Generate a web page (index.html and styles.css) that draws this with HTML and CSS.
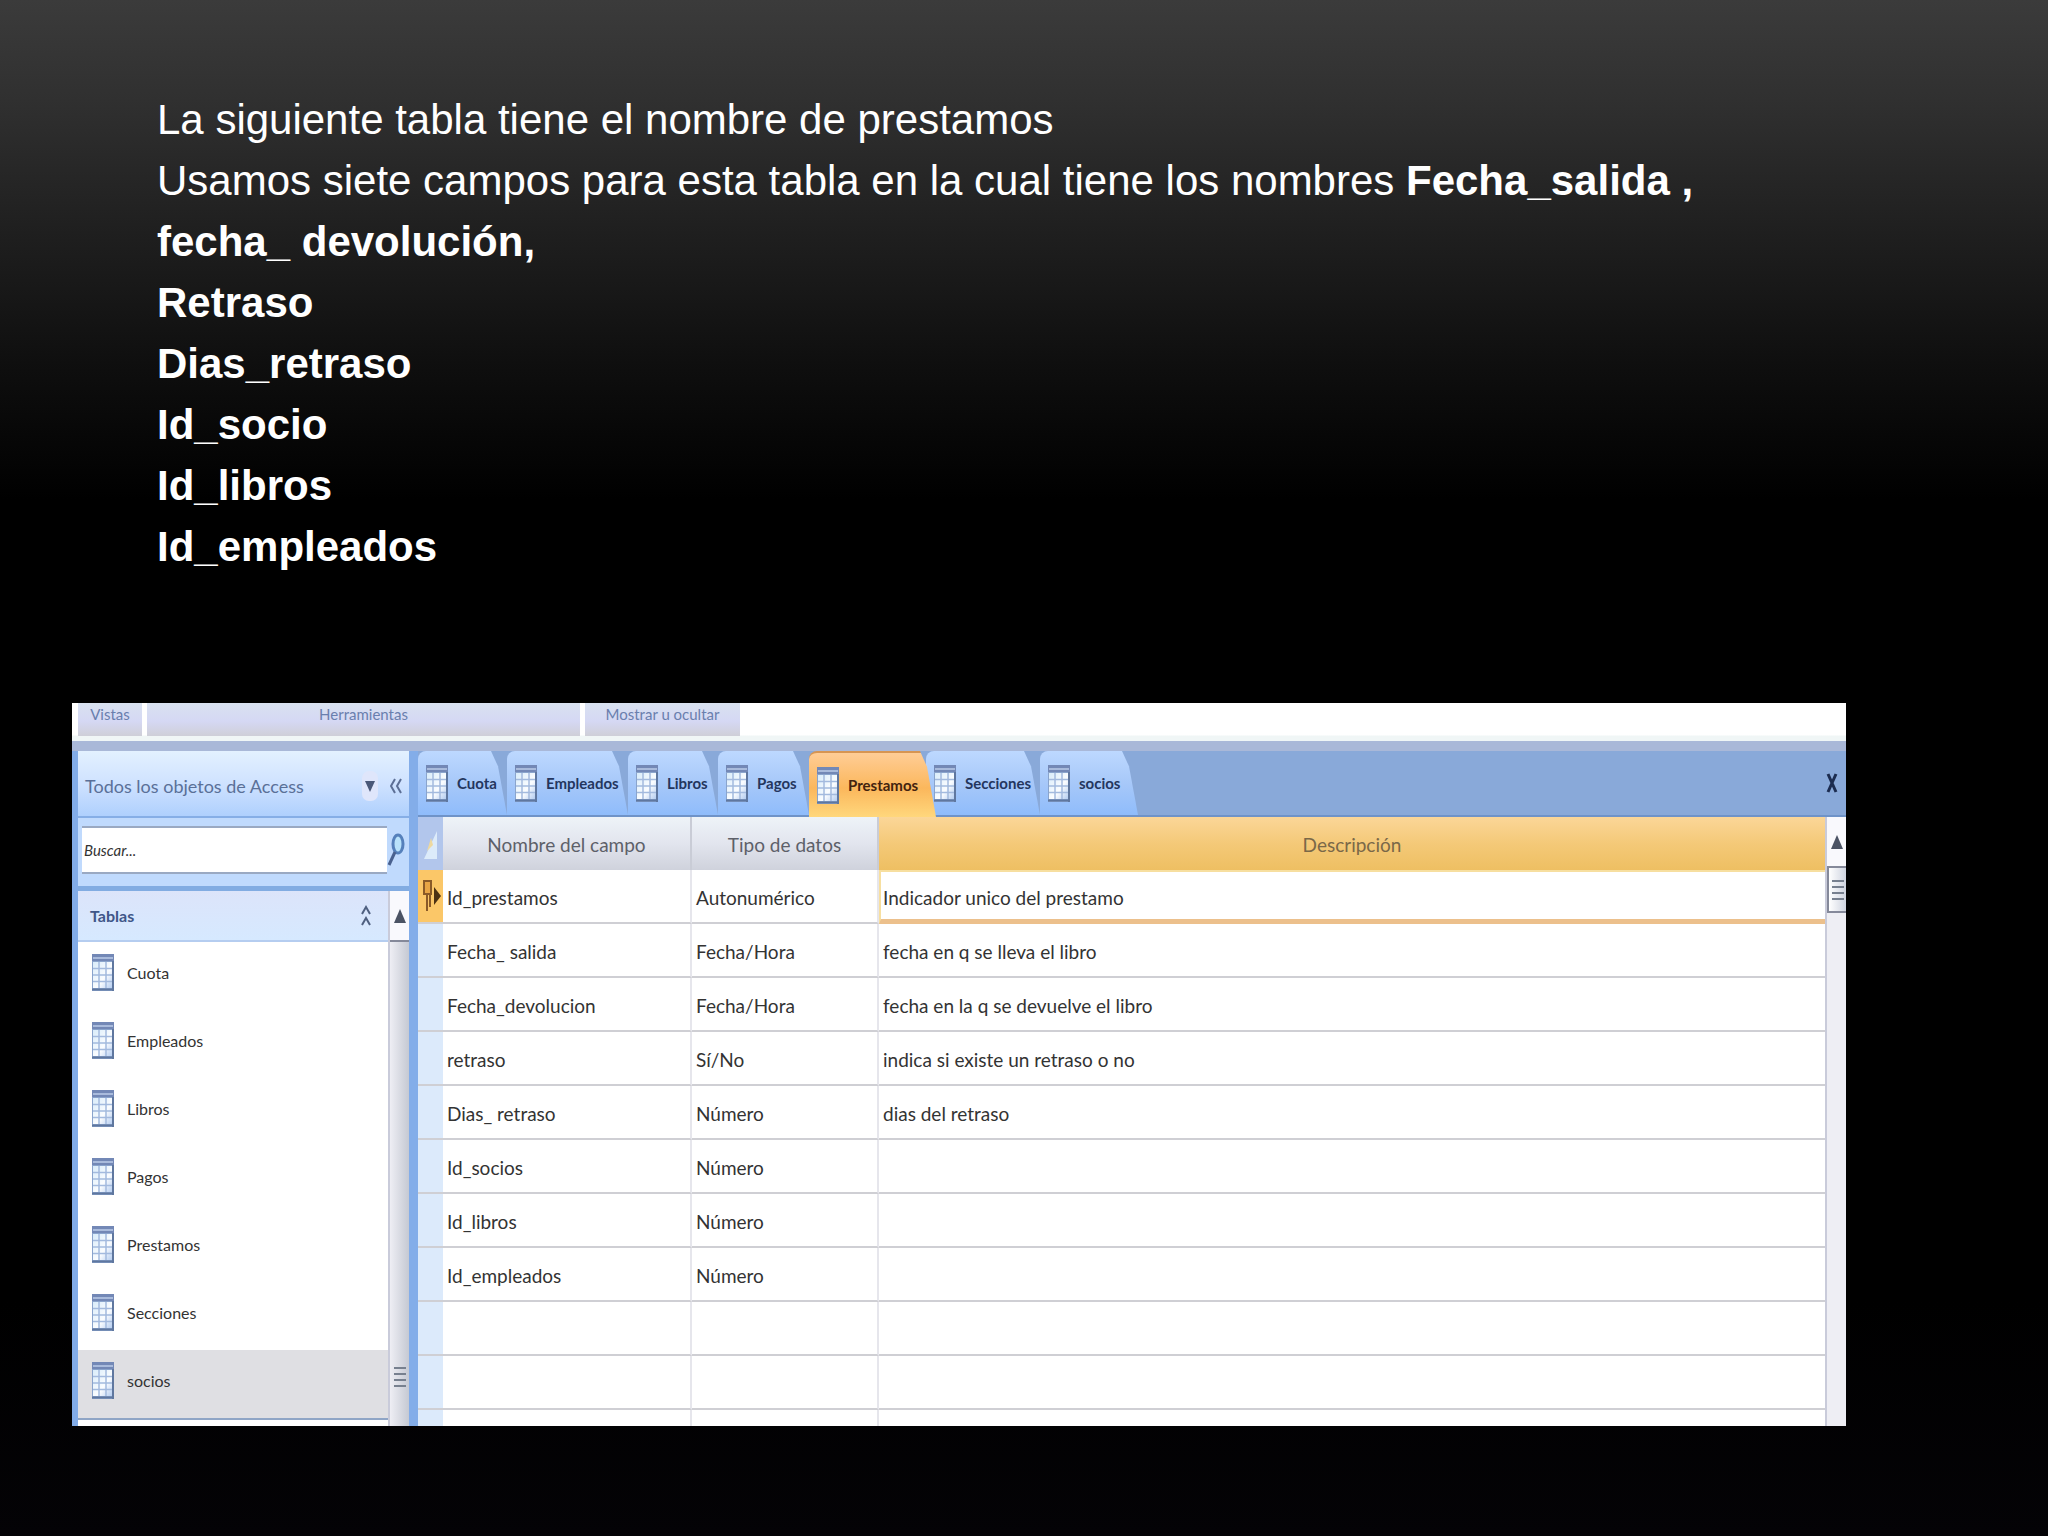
FILE: index.html
```html
<!DOCTYPE html>
<html lang="es">
<head>
<meta charset="UTF-8">
<meta name="viewport" content="width=device-width, initial-scale=1.0">
<title>Tabla Prestamos</title>
<link rel="stylesheet" href="styles.css">
</head>
<body>

<!-- shared icons -->
<svg class="sprite" aria-hidden="true">
  <linearGradient id="gridFill" x1="0" y1="0" x2="1" y2="1">
    <stop offset="0" stop-color="#d9ecfa"/>
    <stop offset="0.6" stop-color="#fbfdff"/>
    <stop offset="1" stop-color="#b5cdf0"/>
  </linearGradient>
  <symbol id="icon-table" viewBox="0 0 22 37" preserveAspectRatio="none">
    <rect x="0" y="0" width="22" height="37" fill="#8aa4cc"/>
    <rect x="0" y="0" width="22" height="7" fill="#7388b6"/>
    <rect x="1" y="3" width="20" height="2" fill="#a9bbdc"/>
    <rect x="1" y="8" width="19" height="26" fill="url(#gridFill)"/>
    <path d="M1 14.5H20M1 21H20M1 27.5H20M7 8V34M14 8V34" stroke="#a3bade" stroke-width="1.5"/>
    <path d="M0 35.5H22M21 7V37" stroke="#5f779f" stroke-width="2"/>
  </symbol>
</svg>

<div class="slide">
  <div class="intro">
    <p>La siguiente tabla tiene el nombre de prestamos</p>
    <p>Usamos siete campos para esta tabla en la cual tiene los nombres <b>Fecha_salida ,</b></p>
    <p><b>fecha_ devolución,</b></p>
    <p><b>Retraso</b></p>
    <p><b>Dias_retraso</b></p>
    <p><b>Id_socio</b></p>
    <p><b>Id_libros</b></p>
    <p><b>Id_empleados</b></p>
  </div>

  <div class="window">
    <div class="ribbon">
      <div class="group">Vistas</div>
      <div class="group">Herramientas</div>
      <div class="group">Mostrar u ocultar</div>
    </div>

    <div class="panes">
      <nav class="sidebar">
        <div class="sidebar-header">
          <span class="sidebar-title">Todos los objetos de Access</span>
          <button class="icon-button" aria-label="Filtro"><svg width="16" height="30" viewBox="0 0 16 30"><rect width="16" height="30" rx="7" fill="#dfe6fb"/><path d="M3 10H13L8 21Z" fill="#4a5878"/></svg></button>
          <button class="icon-button" aria-label="Contraer panel"><svg width="12" height="18" viewBox="0 0 12 18" fill="none" stroke="#5c6f96" stroke-width="2"><path d="M5 2L1 9L5 16M11 2L7 9L11 16"/></svg></button>
        </div>

        <form class="search">
          <input type="text" placeholder="Buscar..." aria-label="Buscar">
          <button class="icon-button" type="button" aria-label="Buscar objeto"><svg width="18" height="36" viewBox="0 0 18 36" fill="none"><ellipse cx="11" cy="12" rx="5" ry="9" fill="#b9e2fb" stroke="#5580bb" stroke-width="3"/><path d="M8 20L2 33" stroke="#49618f" stroke-width="3"/></svg></button>
        </form>

        <div class="objects">
          <div class="object-list">
            <div class="group-title">
              <span>Tablas</span>
              <button class="icon-button" aria-label="Contraer grupo"><svg width="10" height="24" viewBox="0 0 10 24" fill="none" stroke="#4f6080" stroke-width="2"><path d="M1 10L5 3L9 10M1 21L5 14L9 21"/></svg></button>
            </div>
            <a class="object" href="#"><svg class="icon"><use href="#icon-table"/></svg>Cuota</a>
            <a class="object" href="#"><svg class="icon"><use href="#icon-table"/></svg>Empleados</a>
            <a class="object" href="#"><svg class="icon"><use href="#icon-table"/></svg>Libros</a>
            <a class="object" href="#"><svg class="icon"><use href="#icon-table"/></svg>Pagos</a>
            <a class="object" href="#"><svg class="icon"><use href="#icon-table"/></svg>Prestamos</a>
            <a class="object" href="#"><svg class="icon"><use href="#icon-table"/></svg>Secciones</a>
            <a class="object selected" href="#"><svg class="icon"><use href="#icon-table"/></svg>socios</a>
          </div>
          <div class="scrollbar">
            <button class="scroll-up" aria-label="Subir"><svg width="12" height="14" viewBox="0 0 12 14"><path d="M6 0L12 14H0Z" fill="#4b5364"/></svg></button>
            <div class="thumb long"><svg width="12" height="22" viewBox="0 0 12 22" stroke="#77808f" stroke-width="2"><path d="M0 2H12M0 8H12M0 14H12M0 20H12"/></svg></div>
          </div>
        </div>
      </nav>

      <main class="document">
        <div class="tabs">
          <button class="tab"><svg class="icon"><use href="#icon-table"/></svg>Cuota</button>
          <button class="tab"><svg class="icon"><use href="#icon-table"/></svg>Empleados</button>
          <button class="tab"><svg class="icon"><use href="#icon-table"/></svg>Libros</button>
          <button class="tab"><svg class="icon"><use href="#icon-table"/></svg>Pagos</button>
          <button class="tab active"><svg class="icon"><use href="#icon-table"/></svg>Prestamos</button>
          <button class="tab"><svg class="icon"><use href="#icon-table"/></svg>Secciones</button>
          <button class="tab"><svg class="icon"><use href="#icon-table"/></svg>socios</button>
          <button class="close" aria-label="Cerrar"><svg width="12" height="20" viewBox="0 0 12 20" fill="none" stroke="#1c2c50" stroke-width="3"><path d="M2 1L10 19M10 1L2 19"/></svg></button>
        </div>

        <div class="sheet">
          <table>
            <colgroup>
              <col class="col-selector">
              <col class="col-name">
              <col class="col-type">
              <col>
            </colgroup>
            <thead>
              <tr>
                <th class="corner"><svg width="14" height="28" viewBox="0 0 14 28"><path d="M13 0V28H0Z" fill="#dcebfa"/><path d="M7 7L9 14L3 20Z" fill="#eed9a0"/></svg></th>
                <th>Nombre del campo</th>
                <th>Tipo de datos</th>
                <th class="current">Descripción</th>
              </tr>
            </thead>
            <tbody>
              <tr>
                <td class="key"><svg width="20" height="34" viewBox="0 0 20 34"><path d="M3 2H10V15H3ZM6 15V32M9 15V28" fill="#e8a545" stroke="#8a5a28" stroke-width="2"/><path d="M13 8L20 17L13 26Z" fill="#4d3112"/></svg></td>
                <td>Id_prestamos</td><td>Autonumérico</td><td class="editing">Indicador unico del prestamo</td>
              </tr>
              <tr><td></td><td>Fecha_ salida</td><td>Fecha/Hora</td><td>fecha en q se lleva el libro</td></tr>
              <tr><td></td><td>Fecha_devolucion</td><td>Fecha/Hora</td><td>fecha en la q se devuelve el libro</td></tr>
              <tr><td></td><td>retraso</td><td>Sí/No</td><td>indica si existe un retraso o no</td></tr>
              <tr><td></td><td>Dias_ retraso</td><td>Número</td><td>dias del retraso</td></tr>
              <tr><td></td><td>Id_socios</td><td>Número</td><td></td></tr>
              <tr><td></td><td>Id_libros</td><td>Número</td><td></td></tr>
              <tr><td></td><td>Id_empleados</td><td>Número</td><td></td></tr>
              <tr><td></td><td></td><td></td><td></td></tr>
              <tr><td></td><td></td><td></td><td></td></tr>
              <tr class="cut"><td></td><td></td><td></td><td></td></tr>
            </tbody>
          </table>
          <div class="scrollbar">
            <button class="scroll-up" aria-label="Subir"><svg width="12" height="14" viewBox="0 0 12 14"><path d="M6 0L12 14H0Z" fill="#4b5364"/></svg></button>
            <div class="thumb"><svg width="12" height="22" viewBox="0 0 12 22" stroke="#77808f" stroke-width="2"><path d="M0 2H12M0 8H12M0 14H12M0 20H12"/></svg></div>
          </div>
        </div>
      </main>
    </div>
  </div>
</div>

</body>
</html>
```

FILE: styles.css
```css
* {
  box-sizing: border-box;
}
body {
  margin: 0;
  min-height: 100vh;
  font-family: Lato, 'Open Sans', sans-serif;
  background: #020104 linear-gradient(#3b3b3b 0, #303030 100px, #1e1e1e 240px, #0e0e0e 370px, #000 500px, #000 1300px, #040306 1536px) no-repeat;
}
button {
  font-family: inherit;
  border: none;
  background: none;
  padding: 0;
}
svg {
  display: block;
}
.sprite {
  position: absolute;
  width: 0;
  height: 0;
}
.icon {
  width: 22px;
  height: 37px;
  flex: none;
}
.icon-button {
  display: flex;
  align-items: center;
}

.slide {
  padding: 89px 202px 0 72px;
}
.intro {
  min-height: 614px;
  padding-left: 85px;
  color: #fff;
  font-family: 'Liberation Sans', Arial, sans-serif;
  font-size: 42px;
}
.intro p {
  margin: 0;
  line-height: 61px;
}

.window {
  background: #fff;
  color: #333;
  overflow: hidden;
}
.ribbon {
  display: flex;
  gap: 5px;
  height: 38px;
  padding: 0 6px 5px;
  background: linear-gradient(#fff 32px, #f0f6f6 33px);
}
.group {
  width: 64px;
  text-align: center;
  font-size: 15px;
  line-height: 22px;
  color: #6a7fae;
  background: linear-gradient(#d9e2f0, #d5d8f4 18px, #cfcfd8);
}
.group:nth-child(2) {
  width: 433px;
}
.group:nth-child(3) {
  width: 155px;
}

.panes {
  display: grid;
  grid-template-columns: 346px 1fr;
  border-top: 10px solid #a9b8d8;
  background: #89a9d9;
}

/* navigation pane */
.sidebar {
  display: flex;
  flex-direction: column;
  border-left: 6px solid #82ace8;
  border-right: 9px solid #83ade9;
}
.sidebar-header {
  display: flex;
  align-items: center;
  gap: 12px;
  height: 67px;
  padding: 4px 7px 0;
  border-bottom: 2px solid #86aee6;
  background: linear-gradient(#e3f1ff, #cfe2ff 50%, #afd0fd);
}
.sidebar-title {
  flex: 1;
  white-space: nowrap;
  font-size: 18px;
  color: #5a7098;
}
.search {
  display: flex;
  height: 73px;
  padding: 8px 4px 12px;
  border-bottom: 5px solid #82ace2;
  background: #c0dafd;
}
.search input {
  flex: 1;
  min-width: 0;
  padding: 0 2px;
  border: 2px solid #9aa9c2;
  border-width: 2px 0;
  background: #fff;
  font: italic 15px Lato, 'Open Sans', sans-serif;
}
.search input::placeholder {
  color: #333;
  opacity: 1;
}
.objects {
  flex: 1;
  display: flex;
  background: #fff;
}
.object-list {
  flex: 1;
}
.group-title {
  display: flex;
  align-items: center;
  justify-content: space-between;
  height: 51px;
  padding: 0 17px 0 12px;
  border-bottom: 2px solid #b5cdf0;
  background: linear-gradient(#dce4fa, #d6e9ff);
  font-size: 16px;
  font-weight: bold;
  color: #3f5688;
}
.object {
  display: flex;
  align-items: center;
  gap: 13px;
  height: 68px;
  padding: 0 14px 8px;
  font-size: 16px;
  color: #333;
  text-decoration: none;
}
.object.selected {
  height: 70px;
  background: #dfdfe3;
  border-bottom: 2px solid #8fa5c6;
}
.scrollbar {
  display: flex;
  flex-direction: column;
  width: 21px;
  border-left: 2px solid #c9cbda;
  background: #eeeef4;
}
.scroll-up {
  display: flex;
  justify-content: center;
  align-items: center;
  height: 49px;
  background: #f9f9fd;
}
.thumb {
  display: flex;
  justify-content: center;
  align-items: center;
  height: 47px;
  border: 2px solid #85899a;
  border-right: none;
  background: linear-gradient(90deg, #fff, #cfd4e0);
}
.thumb.long {
  flex: 1;
  align-items: flex-end;
  padding-bottom: 38px;
  border-width: 2px 0 0;
  background: linear-gradient(90deg, #eeeef4, #c5c9d3);
}

/* open tables */
.tabs {
  display: grid;
  grid-template-columns: 89px 121px 90px 91px 117px 114px 98px 1fr;
  height: 66px;
  border-bottom: 2px solid #6f93c8;
}
.tab {
  display: flex;
  align-items: center;
  gap: 9px;
  padding: 0 8px;
  border-radius: 8px 12px 0 0;
  background: linear-gradient(#bdd8ff, #a7c8f9 50%, #8fbcfb);
  clip-path: polygon(0 0, calc(100% - 16px) 0, calc(100% - 9px) 24%, 100% 100%, 0 100%);
  font-size: 15px;
  font-weight: bold;
  color: #24365e;
}
.tab.active {
  position: relative;
  z-index: 1;
  margin: 0 -10px -2px 0;
  border-top: 2px solid #d79552;
  background: linear-gradient(#ffcd96, #fbb75c 55%, #ffd77c);
  color: #43230f;
}
.close {
  justify-self: end;
  padding-right: 8px;
}
.sheet {
  display: flex;
}
table {
  flex: 1;
  table-layout: fixed;
  border-collapse: separate;
  border-spacing: 0;
  background: #fff;
}
.col-selector {
  width: 25px;
}
.col-name {
  width: 249px;
}
.col-type {
  width: 187px;
}
th {
  height: 53px;
  padding: 2px 0 0;
  border-right: 2px solid #c9ccd6;
  background: linear-gradient(#eef3f8, #e2e5ee 50%, #cfd2dc);
  font-size: 19px;
  font-weight: normal;
  color: #5d6069;
}
th.corner {
  border: none;
  padding-left: 6px;
  background: #b2c6ec;
}
th.current {
  border: none;
  background: linear-gradient(#fbd698, #f4c978 50%, #eebf62);
  color: #7a6848;
}
td {
  height: 54px;
  padding: 3px 4px 0;
  border-bottom: 2px solid #cfcfd4;
  border-right: 2px solid #e6e6ec;
  font-size: 19px;
  white-space: nowrap;
}
td:first-child {
  padding: 0 0 0 3px;
  border-right: none;
  background: #dceafb;
}
td:last-child {
  border-right: none;
}
td.key {
  background: #fbc768;
}
td.editing {
  padding-left: 2px;
  border: 2px solid #f7dfa0;
  border-right: none;
  border-bottom: 5px solid #ecc08c;
}
.cut td {
  height: 16px;
  border-bottom: none;
}
```
